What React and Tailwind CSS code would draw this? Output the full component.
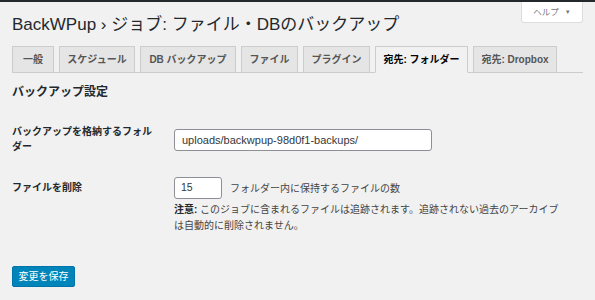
import React from "react";

const tabs = [
  { label: "一般", w: "w-[42px]" },
  { label: "スケジュール", w: "w-[76px]" },
  { label: "DB バックアップ", w: "w-[96px]" },
  { label: "ファイル", w: "w-[57px]" },
  { label: "プラグイン", w: "w-[67px]" },
  { label: "宛先: フォルダー", w: "w-[93px]", active: true },
  { label: "宛先: Dropbox", w: "w-[84px]" },
];

export default function App() {
  return (
    <div
      className="relative w-full h-[300px] overflow-hidden bg-[#f1f1f1] text-[#23282d]"
      style={{ fontFamily: '"Liberation Sans", "Noto Sans CJK JP", sans-serif' }}
    >
      <div className="h-[2px] bg-[#23282d]" />

      <div className="absolute right-[12px] top-[2px] flex h-[21px] w-[62px] items-center justify-center gap-[6px] rounded-b-[3px] border border-t-0 border-[#dddddd] bg-white text-[8.5px] text-[#72777c]">
        <span>ヘルプ</span>
        <span className="text-[6px]">▼</span>
      </div>

      <h1 className="ml-[12px] mt-[11px] h-[24px] text-[17px] font-normal leading-[24px] text-[#23282d]">
        BackWPup › ジョブ: ファイル・DBのバックアップ
      </h1>

      <div className="mx-[12px] mt-[9px] flex gap-[5px] border-b border-[#cccccc]">
        {tabs.map((t) => (
          <div
            key={t.label}
            className={
              t.active
                ? `${t.w} -mb-px flex h-[27px] items-center justify-center border border-[#cccccc] border-b-[#f1f1f1] bg-[#f1f1f1] text-[10px] font-bold text-[#000]`
                : `${t.w} -mb-px flex h-[27px] items-center justify-center border border-[#cccccc] bg-[#e5e5e5] text-[10px] font-bold text-[#555555]`
            }
          >
            {t.label}
          </div>
        ))}
      </div>

      <h2 className="ml-[12px] mt-[11px] h-[16px] text-[12px] font-bold leading-[16px] text-[#23282d]">
        バックアップ設定
      </h2>

      <div className="ml-[12px] mt-[24px] flex items-start">
        <div className="w-[162px] pr-[18px] text-[10px] font-bold leading-[15px] text-[#23282d]">
          バックアップを格納するフォルダー
        </div>
        <div className="mt-[5px] flex h-[22px] w-[258px] items-center rounded-[3px] border border-[#8c8f94] bg-white px-[7px] text-[11px] text-[#32373c]">
          uploads/backwpup-98d0f1-backups/
        </div>
      </div>

      <div className="ml-[12px] mt-[23px] flex items-start">
        <div className="w-[162px] pr-[18px] pt-[3px] text-[10px] font-bold leading-[15px] text-[#23282d]">
          ファイルを削除
        </div>
        <div className="flex flex-col">
          <div className="flex items-center gap-[8px]">
            <div className="flex h-[22px] w-[48px] items-center rounded-[3px] border border-[#8c8f94] bg-white px-[6px] text-[10.5px] text-[#32373c]">
              15
            </div>
            <span className="text-[10px] text-[#444444]">フォルダー内に保持するファイルの数</span>
          </div>
          <p className="mt-[3px] w-[393px] text-[10px] leading-[16px] text-[#444444]">
            <strong className="font-bold text-[#23282d]">注意: </strong>
            このジョブに含まれるファイルは追跡されます。追跡されない過去のアーカイブは自動的に削除されません。
          </p>
        </div>
      </div>

      <button className="ml-[12px] mt-[32px] flex h-[21px] w-[63px] items-center justify-center rounded-[2px] border border-[#0073aa] bg-[#0085ba] text-[10px] text-white">
        変更を保存
      </button>
    </div>
  );
}
